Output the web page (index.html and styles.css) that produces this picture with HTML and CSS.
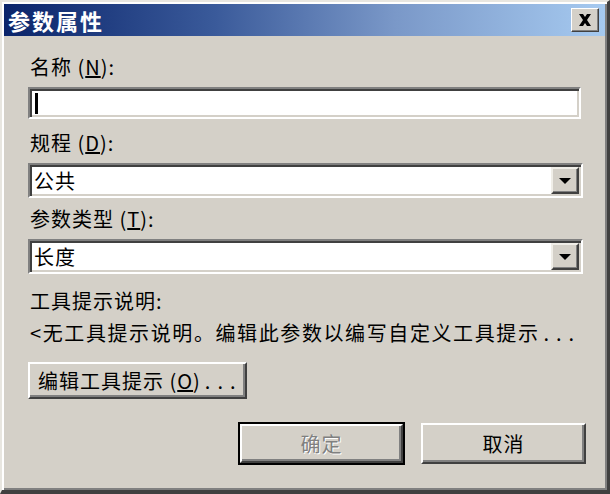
FILE: index.html
```html
<!DOCTYPE html>
<html lang="zh-CN">
<head>
    <meta charset="UTF-8">
    <title>参数属性</title>
    <link rel="stylesheet" href="styles.css">
</head>
<body>
    <div class="dialog">
        <div class="titlebar">
            <span class="title">参数属性</span>
            <span class="close">
                <svg width="14" height="12" viewBox="0 0 14 12">
                    <path d="M1 0 L5 0 L7 3 L9 0 L13 0 L9 6 L13 12 L9 12 L7 9 L5 12 L1 12 L5 6 Z" fill="#000"/>
                </svg>
            </span>
        </div>

        <div class="content">
            <div class="label">名称 (<u>N</u>):</div>
            <div class="field"><span class="caret"></span></div>

            <div class="label gap">规程 (<u>D</u>):</div>
            <div class="field combo">
                <span class="value">公共</span>
                <span class="drop"><span class="arrow"></span></span>
            </div>

            <div class="label">参数类型 (<u>T</u>):</div>
            <div class="field combo">
                <span class="value">长度</span>
                <span class="drop"><span class="arrow"></span></span>
            </div>

            <div class="label small-gap">工具提示说明:</div>
            <div class="desc">&lt;无工具提示说明。编辑此参数以编写自定义工具提示<span class="dots">...</span></div>

            <div class="row">
                <button class="btn edit">编辑工具提示 (<u>O</u>)<span class="dots">...</span></button>
            </div>

            <div class="actions">
                <button class="btn default" disabled>确定</button>
                <button class="btn">取消</button>
            </div>
        </div>
    </div>
</body>
</html>
```

FILE: styles.css
```css
html, body {
    margin: 0;
    padding: 0;
}

body {
    font-family: "Noto Sans CJK SC", "DejaVu Sans", sans-serif;
    background-color: #d4d0c8;
}

.dialog {
    width: 610px;
    height: 494px;
    box-sizing: border-box;
    background-color: #d4d0c8;
    border-top: 2px solid #e8e6e0;
    border-left: 2px solid #e8e6e0;
    border-right: 3px solid #404040;
    border-bottom: 4px solid #404040;
    box-shadow: inset 2px 2px 0 #fff, inset -2px -2px 0 #808080;
    padding: 2px 2px 0 2px;
    display: flex;
    flex-direction: column;
}

.titlebar {
    height: 32px;
    background: linear-gradient(to right, #0a246a 0%, #3a5a9a 35%, #7a98c8 65%, #a6caf0 100%);
    display: flex;
    align-items: center;
    justify-content: space-between;
    padding: 0 6px 0 4px;
}

.title {
    color: #fff;
    font-size: 22px;
    font-weight: bold;
    letter-spacing: 2px;
}

.close {
    width: 28px;
    height: 24px;
    box-sizing: border-box;
    background-color: #d4d0c8;
    border: 1px solid;
    border-color: #fff #404040 #404040 #fff;
    box-shadow: inset -1px -1px 0 #808080;
    display: flex;
    align-items: center;
    justify-content: center;
}

.content {
    padding: 19px 22px 0 24px;
    display: flex;
    flex-direction: column;
}

.label {
    font-size: 20px;
    letter-spacing: 1px;
    line-height: 24px;
    height: 24px;
    color: #000;
    margin-bottom: 8px;
    padding-left: 2px;
}

.label.gap {
    margin-top: 12px;
}

.label.small-gap {
    margin-top: 6px;
}

.field {
    height: 32px;
    box-sizing: border-box;
    background-color: #fff;
    border: 2px solid;
    border-color: #808080 #fff #fff #808080;
    box-shadow: inset 2px 2px 0 #404040, inset -2px -2px 0 #d4d0c8;
    display: flex;
    align-items: center;
    padding: 0 4px 0 4px;
    margin-right: 2px;
}

.caret {
    width: 3px;
    height: 21px;
    background-color: #000;
    margin-left: 1px;
}

.combo {
    height: 35px;
    margin-bottom: 9px;
    justify-content: space-between;
    padding: 0 2px 0 4px;
    margin-right: 0;
}

.value {
    font-size: 20px;
    letter-spacing: 1px;
    color: #000;
}

.drop {
    width: 28px;
    height: 27px;
    box-sizing: border-box;
    background-color: #d4d0c8;
    border: 2px solid;
    border-color: #f0eee8 #404040 #404040 #f0eee8;
    box-shadow: inset -1px -1px 0 #808080;
    display: flex;
    align-items: center;
    justify-content: center;
}

.arrow {
    width: 0;
    height: 0;
    border-left: 6px solid transparent;
    border-right: 6px solid transparent;
    border-top: 6px solid #000;
}

.desc {
    font-size: 20px;
    letter-spacing: 1.6px;
    line-height: 24px;
    color: #000;
    padding-left: 2px;
    white-space: nowrap;
}

.dots {
    letter-spacing: 7px;
    margin-left: 4px;
}

.row {
    margin-top: 17px;
}

.btn {
    font-family: "Noto Sans CJK SC", "DejaVu Sans", sans-serif;
    font-size: 20px;
    letter-spacing: 1px;
    color: #000;
    background-color: #d4d0c8;
    border: 2px solid;
    border-color: #fff #404040 #404040 #fff;
    box-shadow: inset -2px -2px 0 #808080;
    padding: 0;
    margin: 0;
}

.edit {
    width: 219px;
    height: 37px;
    text-align: left;
    padding-left: 8px;
    white-space: nowrap;
}

.actions {
    display: flex;
    justify-content: flex-end;
    gap: 17px;
    margin-top: 24px;
    margin-right: -3px;
}

.actions .btn {
    width: 165px;
    height: 41px;
}

.default {
    outline: 2px solid #000;
    outline-offset: -1px;
    border-width: 3px;
}

.btn:disabled {
    color: #808080;
    text-shadow: 1px 1px 0 #fff;
}
```
